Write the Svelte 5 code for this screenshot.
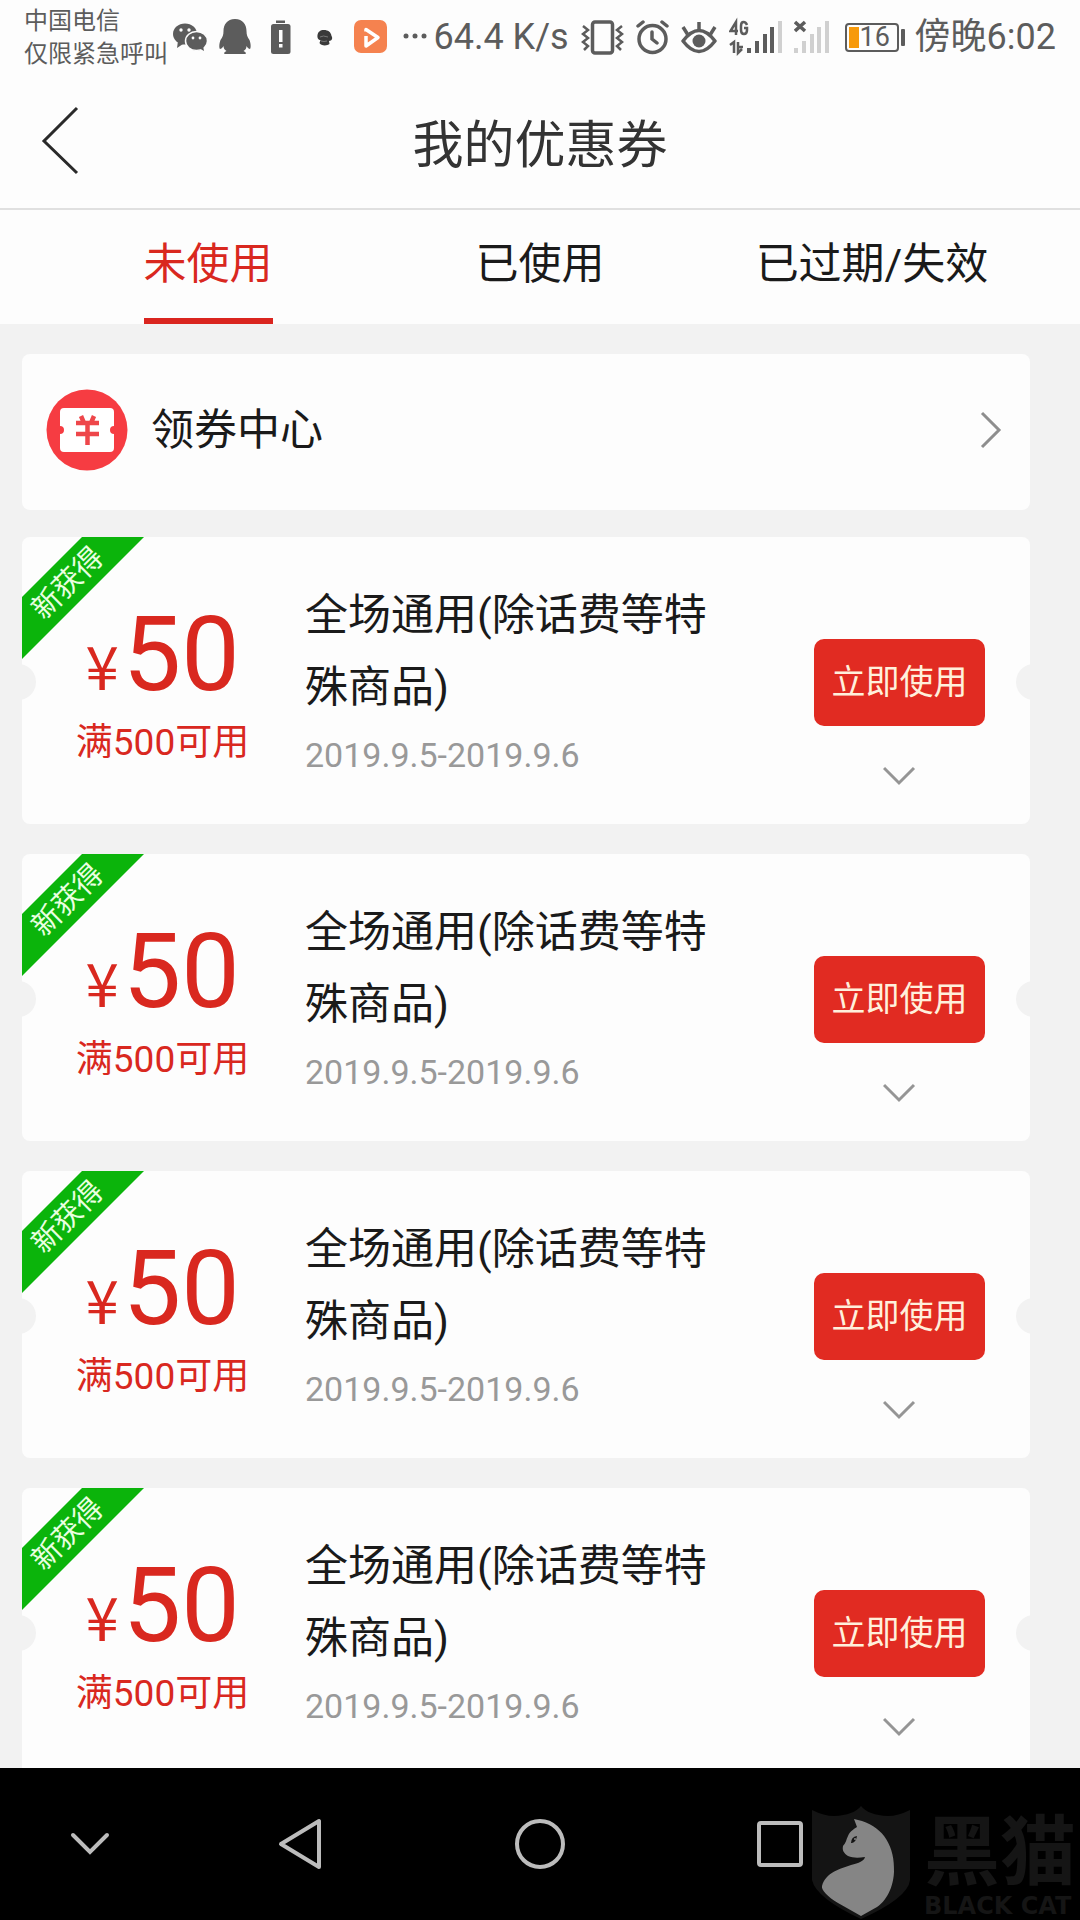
<script>
  const tabs = ['未使用', '已使用', '已过期/失效'];
  let activeTab = 0;

  const coupons = [1, 2, 3, 4].map(id => ({
    id,
    amount: 50,
    limit: '满500可用',
    title: '全场通用(除话费等特殊商品)',
    period: '2019.9.5-2019.9.6',
    isNew: true,
  }));
</script>

<div class="screen">
  <div class="status">
    <div class="carrier">
      <span>中国电信</span>
      <span>仅限紧急呼叫</span>
    </div>

    <div class="notices">
      <!-- wechat -->
      <svg viewBox="0 0 45 40">
        <ellipse cx="17" cy="17" rx="12" ry="10.500" fill="#5c5c5c" />
        <path d="M10 24l-1 7 6-4z" fill="#5c5c5c" />
        <ellipse cx="28.500" cy="24" rx="11" ry="9.500" fill="#5c5c5c" stroke="#fdfdfd" stroke-width="1.500" />
        <path d="M31 31l5 3-1-5z" fill="#5c5c5c" />
        <g fill="#fdfdfd">
          <circle cx="13" cy="13" r="1.700" /><circle cx="21" cy="13" r="1.700" />
          <circle cx="25" cy="21" r="1.400" /><circle cx="32" cy="21" r="1.400" />
        </g>
      </svg>
      <!-- qq -->
      <svg viewBox="0 0 45 40" fill="#5c5c5c">
        <path d="M22 2c-8 0-11.500 6-11.500 12 0 4-1 6-3 9-1.500 4-1.500 8-.5 9 1 0 2.500-1 3.500-3 0 2 1 4 3 5-2 1-3 2-2 3h21c1-1 0-2-2-3 2-1 3-3 3-5 1 2 2.500 3 3.500 3 1-1 1-5-.5-9-2-3-3-5-3-9 0-6-3.500-12-11.500-12z" />
      </svg>
      <!-- battery warning -->
      <svg viewBox="0 0 45 40">
        <rect x="18" y="3.500" width="9" height="2.500" fill="#5c5c5c" />
        <rect x="13" y="7" width="19.500" height="30" rx="2.500" fill="#5c5c5c" />
        <rect x="21" y="13" width="3.500" height="12" fill="#fdfdfd" />
        <rect x="21" y="27" width="3.500" height="3.500" fill="#fdfdfd" />
      </svg>
      <svg viewBox="0 0 45 40" fill="#3a3a3a">
        <path d="M21 13c-4 0-6 2-6.500 5-.5 3 1 5 3 5l-1 3c1 3 8 3 10 1l-.5-3c3 0 4-3 2.500-5-.5-4-3.500-6-7.500-6z" />
        <path d="M17 20q3-2 8 0M18 24q3 1 6 0" fill="none" stroke="#777" />
      </svg>
      <!-- video app -->
      <svg viewBox="0 0 45 40">
        <rect x="6" y="3" width="33" height="33" rx="7" fill="#f5824f" />
        <path d="M18 19v10l12-8.500L18 12.500v2" fill="none" stroke="#fff" stroke-width="3.500" stroke-linejoin="round" />
      </svg>
      <svg class="more" viewBox="0 0 38 40" fill="#5c5c5c">
        <circle cx="13" cy="19" r="2.500" /><circle cx="22" cy="19" r="2.500" /><circle cx="31" cy="19" r="2.500" />
      </svg>
    </div>

    <div class="system">
      <span>64.4 K/s</span>
      <!-- vibrate -->
      <svg width="43" height="40" viewBox="0 0 43 40" fill="none" stroke="#5c5c5c">
        <rect x="11.500" y="5" width="20" height="31" rx="2.500" stroke-width="3.500" />
        <path d="M2 9l5 4-5 4 5 4-5 4 5 4-4 4M41 9l-5 4 5 4-5 4 5 4-5 4 4 4" stroke-width="2.500" />
      </svg>
      <!-- alarm -->
      <svg width="33" height="40" viewBox="0 0 33 40" fill="none" stroke="#5c5c5c" stroke-width="3.500" stroke-linecap="round">
        <circle cx="16.500" cy="22" r="13.500" />
        <path d="M16 15v7l5 4M2 9l5-4M31 9l-5-4" />
      </svg>
      <!-- eye comfort -->
      <svg width="36" height="40" viewBox="0 0 36 40" fill="none" stroke="#5c5c5c" stroke-width="3.500">
        <path d="M2 24Q18 3 34 24Q18 45 2 24z" stroke-linejoin="round" />
        <circle cx="18" cy="24" r="6.500" fill="#5c5c5c" stroke="none" />
        <path d="M18 14V5M7 18L2 10M29 18l5-8" />
      </svg>
      <!-- 4g signal -->
      <svg width="53" height="40" viewBox="0 0 53 40">
        <path d="M7 18V5L1.500 14H9M18 8q-1-3-3.500-3T12 9v4q0 4 3 4t3-4v-2h-3" fill="none" stroke="#5c5c5c" stroke-width="2.500" />
        <path d="M1 28l4-3v11M9 25v11l4-4M9 30h5" fill="none" stroke="#5c5c5c" stroke-width="2.500" />
        <path d="M18 31h4v5h-4zM26 24h4v12h-4zM34 17h4v19h-4zM41 10h4v26h-4z" fill="#5c5c5c" />
        <path d="M49 4h4v32h-4z" fill="#d0d0d0" />
      </svg>
      <!-- no signal -->
      <svg width="35" height="40" viewBox="0 0 35 40">
        <path d="M1 5l10 9M11 5L1 14" stroke="#5c5c5c" stroke-width="3.500" />
        <path d="M0 31h4v5H0zM8 24h4v12H8zM16 17h4v19h-4zM23 10h4v26h-4zM31 4h4v32h-4z" fill="#d0d0d0" />
      </svg>
      <div class="battery"><span class="level"></span>16</div>
      <span>傍晚6:02</span>
    </div>
  </div>

  <header>
    <button class="back" type="button" aria-label="返回">
      <svg width="40" height="70" viewBox="0 0 40 70" fill="none" stroke="#2a2a2a" stroke-width="3">
        <path d="M37 2L4 35l33 32" />
      </svg>
    </button>
    <h1>我的优惠券</h1>
  </header>

  <nav class="tabs">
    {#each tabs as tab, i}
      <button type="button" class="tab" class:active={i === activeTab} on:click={() => (activeTab = i)}>
        <span>{tab}</span>
      </button>
    {/each}
  </nav>

  <main>
    <a class="center" href="#center">
      <svg class="center-icon" viewBox="0 0 82 82">
        <circle cx="41" cy="41" r="40.500" fill="#f63c42" />
        <path d="M18 19h46a4 4 0 0 1 4 4v14a4 4 0 0 0 0 8v14a4 4 0 0 1-4 4H18a4 4 0 0 1-4-4V45a4 4 0 0 0 0-8V23a4 4 0 0 1 4-4z" fill="#fff" />
        <path d="M35 27l3 7M48 27l-3 7M30 34h23M30 45h23M41.500 34v22" fill="none" stroke="#ee464a" stroke-width="4.500" />
      </svg>
      <span>领券中心</span>
      <svg width="22" height="38" viewBox="0 0 22 38" fill="none" stroke="#8e8e8e" stroke-width="3">
        <path d="M2 2l17 17L2 36" />
      </svg>
    </a>

    <div class="coupons">
      {#each coupons as c (c.id)}
        <article class="coupon">
          {#if c.isNew}
            <div class="ribbon"><span>新获得</span></div>
          {/if}
          <div class="value">
            <div class="price"><span class="yen">¥</span>{c.amount}</div>
            <div class="limit">{c.limit}</div>
          </div>
          <div class="info">
            <h2>{c.title}</h2>
            <p>{c.period}</p>
          </div>
          <div class="actions">
            <button class="use" type="button">立即使用</button>
            <button class="expand" type="button" aria-label="展开">
              <svg width="34" height="20" viewBox="0 0 34 20" fill="none" stroke="#959595" stroke-width="3">
                <path d="M1 2l15 15L31 2" />
              </svg>
            </button>
          </div>
        </article>
      {/each}
    </div>
  </main>

  <footer>
    <button type="button" aria-label="收起">
      <svg width="40" height="24" viewBox="0 0 40 24" fill="none" stroke="#bcbcbc" stroke-width="4" stroke-linecap="round">
        <path d="M3 3l17 17L37 3" />
      </svg>
    </button>
    <button type="button" aria-label="后退">
      <svg width="46" height="52" viewBox="0 0 46 52" fill="none" stroke="#bcbcbc" stroke-width="4" stroke-linejoin="round">
        <path d="M42 3v46L4 26z" />
      </svg>
    </button>
    <button type="button" aria-label="主页">
      <svg width="52" height="52" viewBox="0 0 52 52" fill="none" stroke="#bcbcbc" stroke-width="4">
        <circle cx="26" cy="26" r="23" />
      </svg>
    </button>
    <button type="button" aria-label="最近任务">
      <svg width="46" height="46" viewBox="0 0 46 46" fill="none" stroke="#bcbcbc" stroke-width="4">
        <rect x="2" y="2" width="42" height="42" rx="2" />
      </svg>
    </button>

    <div class="brand">
      <svg width="98" height="114" viewBox="0 0 98 114">
        <path d="M0 4Q12 10 22 10Q42 9 49 0Q56 9 76 10Q86 10 98 4V74Q96 92 49 113Q4 92 0 74z" fill="#141414" />
        <path d="M42 13l8 2c22 7 33 26 32 51-1 20-11 31-17 35L49 110 26 97C16 91 9 84 10 80c4-14 18-17 29-21 8-2 13-4 14-8-7 1-12 1-17-1-4-3-6-5-5-10 3-3 3-6 5-10 2-5 6-7 9-9z" fill="#858585" />
        <path d="M39 37q0-6 6-7-1 6-5 7z" fill="#151515" />
        <circle cx="43" cy="33" r="1" fill="#858585" />
      </svg>
      <div class="brand-name">
        <strong>黑猫</strong>
        <span>BLACK CAT</span>
      </div>
    </div>
  </footer>
</div>

<style>
  :global(body) {
    background: #f2f2f2;
  }

  .screen {
    height: 100vh;
    display: flex;
    flex-direction: column;
    overflow: hidden;
    background: #f2f2f2;
    color: #1a1a1a;
    font-family: Roboto, 'Noto Sans CJK SC', sans-serif;
  }

  button {
    padding: 0;
    border: none;
    background: none;
    color: inherit;
    font: inherit;
    cursor: pointer;
  }

  svg { display: block; flex-shrink: 0; }

  /* status bar */
  .status {
    display: flex;
    align-items: center;
    height: 74px;
    padding: 0 24px;
    background: #fdfdfd;
    color: #5c5c5c;
    white-space: nowrap;
  }
  .carrier {
    display: flex;
    flex-direction: column;
    padding-top: 2px;
    font-size: 24px;
    line-height: 33px;
  }
  .notices { display: flex; }
  .notices svg { width: 45px; height: 40px; }
  .notices .more { width: 38px; }
  .system {
    display: flex;
    align-items: center;
    gap: 12px;
    margin-left: auto;
    font-size: 36px;
    line-height: 40px;
  }
  .battery {
    position: relative;
    box-sizing: border-box;
    display: flex;
    align-items: center;
    gap: 1px;
    width: 54px;
    height: 29px;
    margin: 0 4px;
    padding-left: 2px;
    border: 2px solid #5c5c5c;
    border-radius: 4px;
    font-size: 27px;
    line-height: 25px;
  }
  .battery::after {
    content: '';
    position: absolute;
    right: -8px;
    top: 4px;
    width: 4px;
    height: 17px;
    border-radius: 1px;
    background: #5c5c5c;
  }
  .level { width: 10px; height: 21px; background: #f79a0b; }

  /* title bar */
  header {
    display: grid;
    grid-template-columns: 120px 1fr 120px;
    align-items: center;
    height: 134px;
    border-bottom: 2px solid #e0e0e0;
    background: #fdfdfd;
  }
  .back { padding-left: 40px; }
  h1 {
    margin: 0;
    color: #333;
    font-size: 51px;
    font-weight: 400;
    text-align: center;
  }

  .tabs {
    display: grid;
    grid-template-columns: repeat(3, 1fr);
    height: 114px;
    flex-shrink: 0;
    padding: 0 42px;
    background: #fdfdfd;
  }
  .tab {
    display: flex;
    justify-content: center;
    font-size: 43px;
    line-height: 108px;
  }
  .tab span {
    box-sizing: border-box;
    height: 114px;
  }
  .active { color: #d9281f; }
  .active span { border-bottom: 6px solid #da251f; }

  main {
    flex: 1;
    min-height: 0;
    display: flex;
    flex-direction: column;
    gap: 27px;
    padding: 30px 50px 0 22px;
    overflow-y: auto;
    scrollbar-width: none;
  }

  .center {
    display: flex;
    align-items: center;
    flex-shrink: 0;
    gap: 23px;
    height: 156px;
    padding: 0 28px 4px 24px;
    box-sizing: border-box;
    border-radius: 8px;
    background: #fdfdfd;
    color: inherit;
    font-size: 43px;
    line-height: 60px;
    text-decoration: none;
  }
  .center span { flex: 1; }
  .center-icon { width: 82px; height: 82px; }

  .coupons {
    display: flex;
    flex-direction: column;
    gap: 30px;
  }
  .coupon {
    position: relative;
    display: grid;
    grid-template-columns: 283px minmax(0, 1fr) 171px;
    height: 287px;
    padding-right: 45px;
    border-radius: 8px;
    background: #fdfdfd;
  }
  .coupon::before,
  .coupon::after {
    content: '';
    position: absolute;
    top: 127px;
    width: 36px;
    height: 36px;
    border-radius: 50%;
    background: #f2f2f2;
  }
  .coupon::before { left: -22px; }
  .coupon::after { right: -22px; }

  .ribbon {
    position: absolute;
    top: 0;
    left: 0;
    display: grid;
    place-items: center;
    width: 122px;
    height: 122px;
    clip-path: polygon(60px 0, 122px 0, 0 122px, 0 60px);
    background: #0bb40b;
    color: #e9ffe0;
  }
  .ribbon span {
    margin: 0 30px 30px 0;
    font-size: 29px;
    line-height: 36px;
    white-space: nowrap;
    transform: rotate(-45deg);
  }

  .value {
    padding: 57px 2px 0 0;
    color: #d9281f;
    text-align: center;
  }
  .price { font-size: 104px; line-height: 122px; }
  .yen {
    margin-right: 4px;
    font-family: 'Noto Sans CJK SC', sans-serif;
    font-size: 60px;
    line-height: 1;
  }
  .limit { font-size: 37px; line-height: 54px; }

  .info { padding: 42px 80px 0 0; }
  h2 {
    margin: 0;
    font-size: 43px;
    font-weight: 400;
    line-height: 72px;
  }
  p {
    margin: 0;
    color: #999;
    font-size: 34px;
    line-height: 64px;
  }

  .actions {
    display: flex;
    flex-direction: column;
    gap: 20px;
    padding-top: 102px;
  }
  .use {
    height: 87px;
    padding-bottom: 2px;
    border-radius: 10px;
    background: #e12b22;
    color: #fff0dc;
    font-size: 34px;
    line-height: 40px;
  }
  .expand {
    display: grid;
    place-items: center;
    height: 60px;
  }

  /* system navigation */
  footer {
    position: relative;
    display: grid;
    grid-template-columns: 3fr 4fr 4fr 4fr 3fr;
    flex-shrink: 0;
    height: 152px;
    background: #000;
  }
  footer button { display: grid; place-items: center; }

  .brand {
    position: absolute;
    right: 4px;
    bottom: 0;
    display: flex;
    gap: 14px;
    color: #151515;
    pointer-events: none;
  }
  .brand-name {
    display: flex;
    flex-direction: column;
    padding-top: 8px;
  }
  .brand-name strong { font-size: 76px; line-height: 78px; }
  .brand-name span {
    font: bold 24px/28px 'DejaVu Sans', sans-serif;
    white-space: nowrap;
  }
</style>
